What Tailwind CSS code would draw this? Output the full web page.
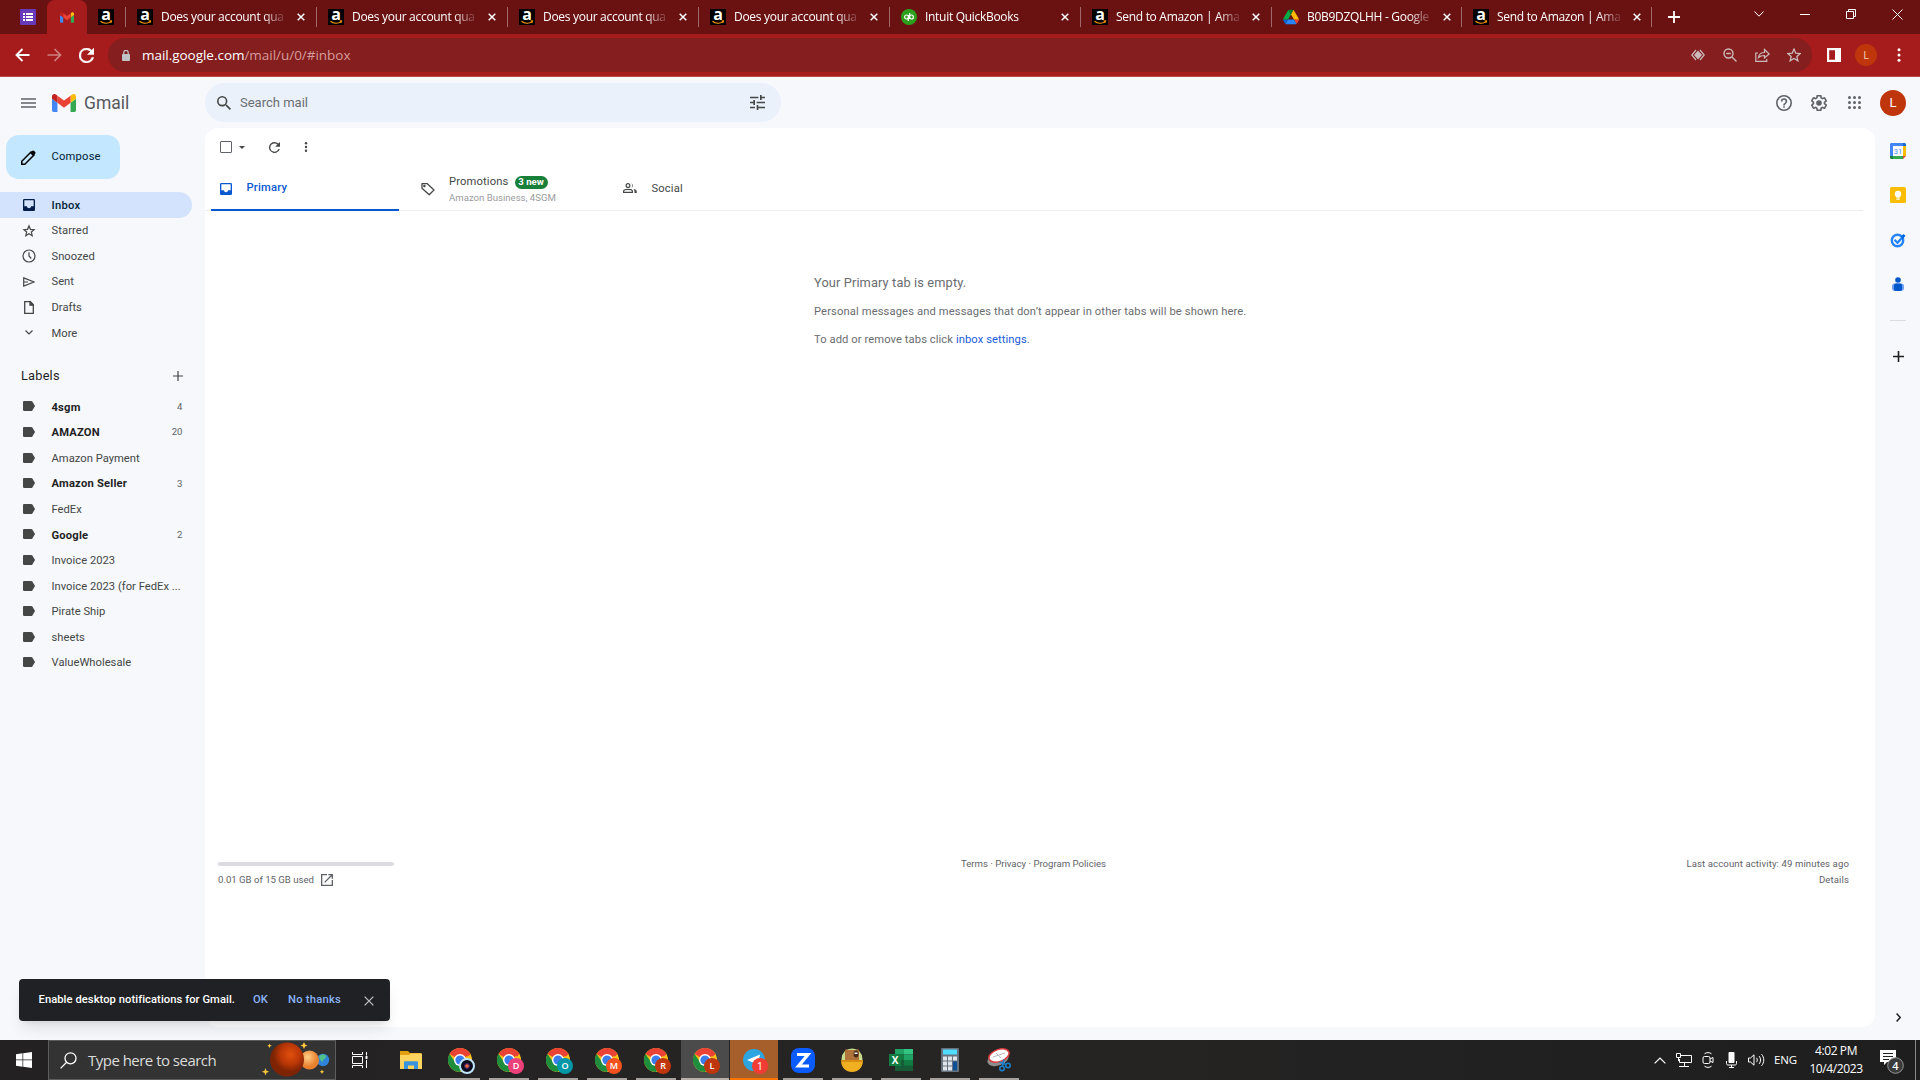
<!DOCTYPE html>
<html lang="en">
<head>
  <meta charset="UTF-8">
  <meta name="viewport" content="width=device-width, initial-scale=1.0">
  <title>Gmail</title>
  <script src="https://cdn.jsdelivr.net/npm/@tailwindcss/browser@4"></script>
  <style>
    body {
      font-family: Roboto, "Liberation Sans", sans-serif;
    }
    .chrome-ui {
      font-family: "Open Sans", "Noto Sans", sans-serif;
    }
  </style>
</head>
<body class="w-[1920px] h-[1080px] overflow-hidden flex flex-col bg-[#f6f8fc] text-[#444746]">

  <!-- shared icons -->
  <svg class="hidden">
    <symbol id="amazon" viewBox="0 0 16 16">
      <rect width="16" height="16" fill="#000"/>
      <text x="8" y="11" font-family="Open Sans" font-weight="700" font-size="16" fill="#fff" text-anchor="middle">a</text>
      <path d="M2.500 12.300c3 2.300 7.500 2.400 10.500.6M11.500 12l2-.2-.6 2" fill="none" stroke="#f90" stroke-width="1.100"/>
    </symbol>
    <symbol id="quickbooks" viewBox="0 0 16 16">
      <circle cx="8" cy="8" r="8" fill="#2ca01c"/>
      <circle cx="5.600" cy="8" r="2" fill="none" stroke="#fff" stroke-width="1.200"/>
      <circle cx="10.400" cy="8" r="2" fill="none" stroke="#fff" stroke-width="1.200"/>
      <path d="M7.300 6v6M8.700 4v6" stroke="#fff" stroke-width="1.200"/>
    </symbol>
    <symbol id="drive" viewBox="0 0 87.3 78">
      <path d="m6.6 66.85 3.85 6.65c.8 1.4 1.95 2.5 3.3 3.3l13.75-23.8h-27.5c0 1.550.4 3.100 1.200 4.500z" fill="#0066da"/>
      <path d="m43.650 25-13.750-23.800c-1.350.8-2.500 1.900-3.300 3.300l-25.400 44a9.060 9.060 0 0 0 -1.200 4.500h27.500z" fill="#00ac47"/>
      <path d="m73.550 76.800c1.350-.8 2.500-1.900 3.300-3.300l1.600-2.750 7.650-13.250c.8-1.400 1.200-2.950 1.200-4.500h-27.502l5.852 11.500z" fill="#ea4335"/>
      <path d="m43.650 25 13.750-23.800c-1.350-.8-2.900-1.200-4.500-1.200h-18.500c-1.600 0-3.150.45-4.500 1.200z" fill="#00832d"/>
      <path d="m59.800 53h-32.300l-13.750 23.800c1.350.8 2.900 1.200 4.500 1.200h50.800c1.600 0 3.150-.45 4.500-1.200z" fill="#2684fc"/>
      <path d="m73.400 26.500-12.700-22c-.8-1.400-1.950-2.500-3.300-3.300l-13.750 23.800 16.150 28h27.450c0-1.550-.4-3.100-1.200-4.500z" fill="#ffba00"/>
    </symbol>
    <symbol id="gmail" viewBox="52 42 88 66">
      <path fill="#4285f4" d="M58 108h14V74L52 59v43c0 3.320 2.690 6 6 6"/>
      <path fill="#34a853" d="M120 108h14c3.320 0 6-2.690 6-6V59l-20 15"/>
      <path fill="#fbbc04" d="M120 48v26l20-15v-8c0-7.420-8.470-11.650-14.400-7.200"/>
      <path fill="#ea4335" d="M72 74V48l24 18 24-18v26L96 92"/>
      <path fill="#c5221f" d="M52 51v8l20 15V48l-5.600-4.200c-5.940-4.450-14.400-.22-14.400 7.200"/>
    </symbol>
    <symbol id="chrome" viewBox="0 0 24 24">
      <circle cx="12" cy="12" r="12" fill="#fbc116"/>
      <path d="M12 12 1.600 6A12 12 0 0 1 22.400 6z" fill="#ea4335"/>
      <path d="M12 12 12 24A12 12 0 0 1 1.600 6L7 14z" fill="#1e8e3e"/>
      <path d="M12 24 17 15 7 14z" fill="#1e8e3e"/>
      <path d="M12 6h10.400L20 8.500z" fill="#ea4335"/>
      <circle cx="12" cy="12" r="6" fill="#fff"/>
      <circle cx="12" cy="12" r="4.600" fill="#3b7ded"/>
    </symbol>
    <symbol id="label" viewBox="0 0 12 10">
      <path d="M1.200 0h7c.5 0 .9.200 1.200.6L12 5 9.400 9.400c-.3.400-.7.600-1.200.6h-7A1.200 1.200 0 0 1 0 8.800V1.200C0 .5.500 0 1.200 0z"/>
    </symbol>
    <symbol id="inbox" viewBox="3 3 18 18">
      <path d="M19 3H5a2 2 0 0 0-2 2v14c0 1.100.9 2 2 2h14a2 2 0 0 0 2-2V5a2 2 0 0 0-2-2zm0 11h-4c0 1.660-1.350 3-3 3s-3-1.340-3-3H5V5h14v9z"/>
    </symbol>
    <symbol id="close" viewBox="0 0 8 8">
      <path d="M.7.7l6.600 6.600M7.300.7.700 7.300" stroke="currentColor" stroke-width="1.500" fill="none"/>
    </symbol>
  </svg>

  <!-- browser tabs -->
  <div class="chrome-ui h-[34px] shrink-0 bg-[#6a1112] flex text-white">
    <div class="w-[47px] flex items-center pl-5">
      <svg class="w-4 h-4" viewBox="0 0 16 16"><rect width="16" height="16" rx="1" fill="#673ab7"/><path d="M3 4h2v2H3zM6 4h7v2H6zM3 7h2v2H3zM6 7h7v2H6zM3 10h2v2H3zM6 10h7v2H6z" fill="#fff"/></svg>
    </div>
    <div class="w-10 bg-[#a61c1d] rounded-t-lg flex items-center justify-center"><svg class="w-[14px] h-[11px]"><use href="#gmail"/></svg></div>
    <div class="w-[38px] flex items-center pl-[11px]"><svg class="w-4 h-4"><use href="#amazon"/></svg></div>
    <div id="tabs" class="flex"></div>
    <div class="border-l border-[#a06a6a] h-5 mt-[7px] pl-4 flex items-center">
      <svg class="w-3 h-3" viewBox="0 0 12 12"><path d="M6 0v12M0 6h12" stroke="#fff" stroke-width="1.800"/></svg>
    </div>
    <div class="ml-auto flex items-center h-[28px] gap-[36px] pr-[17px]">
      <svg class="w-[10px] h-[6px]" viewBox="0 0 10 6"><path d="M.5.5 5 5.200 9.500.5" fill="none" stroke="#fff"/></svg>
      <svg class="w-[10px] h-[10px]" viewBox="0 0 10 10"><path d="M0 5.500h10" stroke="#fff"/></svg>
      <svg class="w-[10px] h-[10px]" viewBox="0 0 10 10"><path d="M.5 2.500h7v7h-7zM2.500 2V.5h7v7H8" fill="none" stroke="#fff"/></svg>
      <svg class="w-[11px] h-[11px]" viewBox="0 0 11 11"><path d="M.5.5l10 10M10.500.5l-10 10" stroke="#fff"/></svg>
    </div>
  </div>

  <!-- address bar -->
  <div class="chrome-ui h-[43px] shrink-0 bg-[#a61c1d] border-b border-[#b94a4b] flex items-center">
    <div class="flex items-center pl-[15px] gap-[17px] w-[108px]">
      <svg class="w-[15px] h-[14px]" viewBox="0 0 15 14"><path d="M14.500 7H1.500M7.500 1 1.500 7l6 6" fill="none" stroke="#fff" stroke-width="1.900"/></svg>
      <svg class="w-[15px] h-[14px]" viewBox="0 0 15 14"><path d="M.5 7h13M7.500 1l6 6-6 6" fill="none" stroke="#cf8080" stroke-width="1.700"/></svg>
      <svg class="w-[15px] h-[15px]" viewBox="4 4 16 16"><path fill="#fff" stroke="#fff" stroke-width=".5" d="M17.650 6.350A7.960 7.960 0 0 0 12 4a8 8 0 1 0 7.730 10h-2.080A6 6 0 1 1 12 6c1.660 0 3.140.69 4.220 1.780L13 11h7V4l-2.350 2.350z"/></svg>
    </div>
    <div class="w-[1704px] h-[34px] rounded-full bg-[#841e1f] flex items-center pl-[14px] pr-[11px]">
      <svg class="w-2 h-[11px]" viewBox="0 0 8 11"><rect y="4" width="8" height="7" rx="1" fill="#c0c4c6"/><path d="M1.800 4V2.500a2.200 2.200 0 0 1 4.400 0V4" fill="none" stroke="#c0c4c6" stroke-width="1.200"/></svg>
      <p class="ml-3 text-[13.5px] text-[#d79c9c] tracking-[-0.03px]"><span class="text-white">mail.google.com</span>/mail/u/0/#inbox</p>
      <div class="ml-auto flex items-center gap-[17px] text-[#cdbcbc]">
        <svg class="-ml-0.5 mr-0.5 w-[14px] h-3" viewBox="0 0 14 12"><path d="M5 1 .8 6 5 11M9 1l4.200 5L9 11" fill="none" stroke="currentColor" stroke-width="1.200"/><path d="M7 1.500 11 6l-4 4.500L3 6z" fill="currentColor"/></svg>
        <svg class="-ml-px mr-px w-[14px] h-[14px]" viewBox="0 0 14 14" fill="none" stroke="currentColor" stroke-width="1.400"><circle cx="5.500" cy="5.500" r="4.500"/><path d="M9 9l4.500 4.500M3.200 5.500h4.600"/></svg>
        <svg class="w-[15px] h-[14px]" viewBox="0 0 15 14" fill="none" stroke="currentColor" stroke-width="1.200"><path d="M3 5H.8v8.300h11V11M3.500 9.500c.5-3.300 2.500-5 6-5V1.500l4.700 4.500-4.700 4V7.500c-2.800 0-4.500.5-6 2z"/></svg>
        <svg class="w-[14px] h-[14px]" viewBox="0 0 24 24" fill="none" stroke="currentColor" stroke-width="2.200"><path d="M12 1.800l3 7 7.600.7-5.700 5 1.700 7.500-6.600-4-6.600 4 1.700-7.500-5.700-5 7.600-.7z"/></svg>
      </div>
    </div>
    <svg class="ml-[15px] w-[14px] h-[14px]" viewBox="0 0 14 14"><path d="M0 0h14v14H0zM2.200 2.200v9.600H8V2.200z" fill="#fff" fill-rule="evenodd"/></svg>
    <div class="ml-[14px] w-[22px] h-[22px] rounded-full bg-[#bf360c] text-[#f5cdbd] text-[11px] flex items-center justify-center">L</div>
    <svg class="ml-[20px] w-[4px] h-[14px]" viewBox="0 0 4 14" fill="#fff"><circle cx="2" cy="1.800" r="1.500"/><circle cx="2" cy="7" r="1.500"/><circle cx="2" cy="12.200" r="1.500"/></svg>
  </div>

  <!-- gmail header -->
  <header class="h-[51px] shrink-0 flex items-center pl-[21px] pr-[14px]">
    <svg class="w-[15px] h-[10px]" viewBox="0 0 15 10"><path d="M0 1h15M0 5h15M0 9h15" stroke="#5f6368" stroke-width="1.500"/></svg>
    <svg class="ml-4 w-6 h-[18px]"><use href="#gmail"/></svg>
    <span class="ml-2 pt-0.5 w-[121px] text-[17.5px] text-[#55585c]">Gmail</span>
    <div class="w-[576px] h-[39px] rounded-full bg-[#eaf1fb] flex items-center pl-3 pr-4">
      <svg class="w-[14px] h-[14px]" viewBox="3 3 17.500 17.500" fill="#444746"><path d="M15.500 14h-.79l-.28-.27A6.470 6.470 0 0 0 16 9.500 6.500 6.500 0 1 0 9.500 16c1.610 0 3.090-.59 4.230-1.570l.27.28v.79l5 4.990L20.490 19l-4.990-5zm-6 0a4.500 4.500 0 1 1 0-9 4.500 4.500 0 0 1 0 9z"/></svg>
      <span class="ml-[9px] text-[13px] text-[#6a6e72]">Search mail</span>
      <svg class="ml-auto w-[15px] h-[15px]" viewBox="3 3 18 18" fill="#444746"><path d="M3 17v2h6v-2H3zM3 5v2h10V5H3zm10 16v-2h8v-2h-8v-2h-2v6h2zM7 9v2H3v2h4v2h2V9H7zm14 4v-2H11v2h10zm-6-4h2V7h4V5h-4V3h-2v6z"/></svg>
    </div>
    <div class="ml-auto flex items-center text-[#5f6368]">
      <svg class="w-4 h-4" viewBox="2 2 20 20" fill="currentColor"><path d="M11 18h2v-2h-2v2zm1-16a10 10 0 1 0 0 20 10 10 0 0 0 0-20zm0 18a8 8 0 1 1 0-16 8 8 0 0 1 0 16zm0-14a4 4 0 0 0-4 4h2a2 2 0 1 1 4 0c0 2-3 1.750-3 5h2c0-2.250 3-2.500 3-5a4 4 0 0 0-4-4z"/></svg>
      <svg class="ml-[19px] w-4 h-4" viewBox="2 2 20 20" fill="currentColor"><path d="M13.850 22.250h-3.700c-.74 0-1.360-.54-1.450-1.270l-.27-1.890c-.27-.14-.53-.29-.79-.46l-1.800.72c-.7.260-1.470-.03-1.810-.65L2.200 15.530c-.35-.66-.2-1.440.36-1.880l1.530-1.190c-.01-.15-.02-.3-.02-.46 0-.15.01-.31.020-.46l-1.520-1.190c-.59-.45-.74-1.260-.37-1.880l1.850-3.190c.34-.62 1.110-.9 1.790-.63l1.810.73c.26-.17.520-.32.780-.46l.27-1.910c.09-.7.710-1.250 1.440-1.250h3.700c.74 0 1.360.54 1.450 1.270l.27 1.890c.27.14.53.29.79.46l1.800-.72c.71-.26 1.480.03 1.820.65l1.840 3.180c.36.66.2 1.440-.36 1.880l-1.520 1.190c.01.150.02.300.02.460s-.01.310-.02.460l1.520 1.190c.56.45.72 1.230.37 1.860l-1.860 3.220c-.34.62-1.110.9-1.800.63l-1.800-.72c-.26.17-.52.32-.78.46l-.27 1.910c-.1.680-.72 1.220-1.460 1.220zm-3.230-2h2.760l.37-2.550.53-.22c.44-.18.880-.44 1.340-.78l.45-.34 2.380.96 1.380-2.400-2.030-1.580.07-.56c.03-.26.060-.51.060-.78s-.03-.53-.06-.78l-.07-.56 2.030-1.580-1.390-2.400-2.390.96-.45-.35c-.42-.32-.87-.58-1.330-.77l-.52-.22-.37-2.550h-2.760l-.37 2.550-.53.21c-.44.19-.88.44-1.340.79l-.45.33-2.380-.95-1.390 2.390 2.030 1.580-.07.56a7 7 0 0 0-.06.79c0 .260.02.530.06.780l.07.56-2.030 1.580 1.380 2.400 2.390-.96.45.35c.43.33.86.58 1.330.77l.53.22.38 2.550z"/><circle cx="12" cy="12" r="3.500"/></svg>
      <svg class="ml-[21px] w-[13px] h-[13px]" viewBox="0 0 13 13" fill="currentColor"><circle cx="1.500" cy="1.500" r="1.500"/><circle cx="6.500" cy="1.500" r="1.500"/><circle cx="11.500" cy="1.500" r="1.500"/><circle cx="1.500" cy="6.500" r="1.500"/><circle cx="6.500" cy="6.500" r="1.500"/><circle cx="11.500" cy="6.500" r="1.500"/><circle cx="1.500" cy="11.500" r="1.500"/><circle cx="6.500" cy="11.500" r="1.500"/><circle cx="11.500" cy="11.500" r="1.500"/></svg>
      <div class="ml-[19px] w-[26px] h-[26px] rounded-full bg-[#bf360c] text-white text-[13px] flex items-center justify-center">L</div>
    </div>
  </header>

  <div class="flex h-[912px] shrink-0">
    <!-- left nav -->
    <nav class="w-[205px] shrink-0 pt-[7px] text-[11.2px]">
      <div class="ml-[6px] w-[114px] h-[44px] rounded-[13px] bg-[#c2e7ff] flex items-center pl-[15px] text-[#001d35]">
        <svg class="w-[15px] h-[15px]" viewBox="0 0 15 15"><path d="M.8 11.200 10 2l3 3-9.200 9.200H.8z" fill="none" stroke="#000" stroke-width="1.500"/><path d="M9 3l2-2c.7-.7 1.500-.7 2.200 0l.8.800c.7.700.7 1.500 0 2.200l-2 2z" fill="#000"/></svg>
        <span class="ml-[15.500px] tracking-[0.2px]">Compose</span>
      </div>
      <div class="mt-[13.2px]">
        <div class="w-48 h-[25.6px] rounded-r-full bg-[#d3e3fd] flex items-center pl-[23px] gap-[16.500px] font-medium text-[#001d35]"><svg class="w-3 h-3" fill="#041e49"><use href="#inbox"/></svg><span class="pt-0.5 tracking-[0.250px]">Inbox</span></div>
        <div class="h-[25.6px] flex items-center pl-[22px] gap-[15.500px]"><svg class="w-[14px] h-[14px]" viewBox="1 1 22 22" fill="none" stroke="#444746" stroke-width="1.900"><path d="M12 4l2.300 5.400 5.700.5-4.300 3.800 1.300 5.700-5-3-5 3 1.300-5.700L4 9.900l5.700-.5z"/></svg><span class="pt-0.5 tracking-[0.1px]">Starred</span></div>
        <div class="h-[25.6px] flex items-center pl-[22px] gap-[15.500px]"><svg class="w-[14px] h-[14px]" viewBox="0 0 14 14" fill="none" stroke="#444746" stroke-width="1.200"><circle cx="7" cy="7" r="6"/><path d="M7 3.300V7l2.300 2.500"/></svg><span class="pt-0.5">Snoozed</span></div>
        <div class="h-[25.6px] flex items-center pl-[23px] gap-[16.500px]"><svg class="w-3 h-[10px]" viewBox="0 0 12 10" fill="none" stroke="#444746" stroke-width="1.200"><path d="M.7.900 11 5 .7 9.100zM.7 5H5"/></svg><span class="pt-0.5">Sent</span></div>
        <div class="h-[25.6px] flex items-center pl-6 gap-[17.500px]"><svg class="w-[10px] h-[13px]" viewBox="0 0 10 13" fill="none" stroke="#444746" stroke-width="1.300"><path d="M.7.700h5.600l3 3v8.600H.7z"/><path d="M6 .5v3.700h3.500z" fill="#444746"/></svg><span class="pt-0.5">Drafts</span></div>
        <div class="h-[25.6px] flex items-center pl-[25px] gap-[18.500px]"><svg class="w-2 h-[5px]" viewBox="0 0 8 5" fill="none" stroke="#444746" stroke-width="1.200"><path d="M.5.500 4 4 7.500.500"/></svg><span class="pt-0.5">More</span></div>
      </div>
      <div class="h-[48.4px] pt-[12px] pl-[21px] pr-[22px] flex items-center justify-between text-[#1f1f1f]">
        <span class="text-[12.8px] tracking-[0.2px]">Labels</span>
        <svg class="w-[10px] h-[10px]" viewBox="0 0 10 10"><path d="M5 0v10M0 5h10" stroke="#444746" stroke-width="1.200"/></svg>
      </div>
      <div id="labels"></div>
    </nav>

    <!-- mail card -->
    <main class="w-[1670px] h-[899px] bg-white rounded-[13px] flex flex-col">
      <div class="h-[38px] flex items-center pl-[15px] text-[#444746]">
        <div class="w-3 h-3 border-[1.500px] border-[#5f6368] rounded-[1px]"></div>
        <svg class="ml-[7px] w-[6px] h-[3px]" viewBox="0 0 6 3"><path d="M0 0h6L3 3z" fill="#444746"/></svg>
        <svg class="ml-[23.500px] w-[11px] h-[11px]" viewBox="4 4 16 16" fill="#444746"><path d="M17.650 6.350A7.960 7.960 0 0 0 12 4a8 8 0 1 0 7.730 10h-2.080A6 6 0 1 1 12 6c1.660 0 3.140.69 4.220 1.780L13 11h7V4l-2.350 2.350z"/></svg>
        <svg class="ml-[24.500px] w-[4px] h-[10px]" viewBox="0 0 4 10" fill="#444746"><circle cx="2" cy="1.200" r="1.200"/><circle cx="2" cy="5" r="1.200"/><circle cx="2" cy="8.800" r="1.200"/></svg>
      </div>
      <div class="w-[1658px] h-[45px] border-b border-[#eceff1] flex pl-[6px] text-[11.2px]">
        <div class="w-[188px] h-[45px] border-b-2 border-[#0b57d0] flex items-center pl-[9px] pt-0.5 text-[#0b57d0] font-medium">
          <svg class="w-3 h-3" fill="#0b57d0"><use href="#inbox"/></svg><span class="ml-[14.500px] tracking-[0.2px]">Primary</span>
        </div>
        <div class="w-[202px] flex items-center pl-[22px] pt-px">
          <svg class="w-[14px] h-[14px]" viewBox="0 0 14 14" fill="none" stroke="#444746" stroke-width="1.300"><path d="M1 1.700h5.300L13 8l-4.800 4.800L1 6.300z" stroke-linejoin="round"/><circle cx="3.400" cy="4" r=".6"/></svg>
          <div class="ml-[14px] pt-[3px]">
            <div class="flex items-center h-[14px] gap-[6px] tracking-[0.150px]">Promotions <span class="bg-[#188038] text-white font-bold text-[9.6px] tracking-normal rounded-full w-[33px] h-[13px] flex items-center justify-center">3 new</span></div>
            <div class="text-[9.6px] leading-[15px] text-[#9a9c9e]">Amazon Business, 4SGM</div>
          </div>
        </div>
        <div class="flex items-center pl-[22px]">
          <svg class="w-[14px] h-[10px]" viewBox="0 0 14 10"><circle cx="5" cy="2.500" r="1.900" fill="none" stroke="#444746" stroke-width="1.200"/><path d="M.6 9.400V8.300C.6 5.800 9.400 5.800 9.400 8.300v1.100z" fill="none" stroke="#444746" stroke-width="1.200"/><path d="M8.300.2a2.500 2.500 0 0 1 0 4.700 3.500 3.500 0 0 0 0-4.700zM10.500 6c2 .4 3.200 1.100 3.200 2.300V10h-2.200V8.300c0-.9-.4-1.700-1-2.300z" fill="#444746"/></svg>
          <span class="ml-[14.500px] pt-0.5 tracking-[0.150px]">Social</span>
        </div>
      </div>
      <div class="pl-[609px] pt-[62px] text-[11.2px] tracking-[0.120px] text-[#6a6d70]">
        <p class="text-[12.8px] leading-[20px]">Your Primary tab is empty.</p>
        <p class="mt-[10px] leading-[18px]">Personal messages and messages that don’t appear in other tabs will be shown here.</p>
        <p class="mt-[10px] leading-[18px] tracking-[0.080px]">To add or remove tabs click <a class="text-[#1a5bd6]" href="#">inbox settings</a>.</p>
      </div>
      <footer class="mt-auto mb-[139px] pl-[13px] pr-[26px] grid grid-cols-3 text-[9.6px] leading-[16px] text-[#5f6368]">
        <div class="pt-[6px]">
          <div class="w-[176px] h-1 rounded-full bg-[#dadce0]"></div>
          <div class="mt-[6px] flex items-center gap-[7px]">0.01 GB of 15 GB used
            <svg class="w-3 h-3" viewBox="3 3 18 18" fill="#5f6368"><path d="M19 19H5V5h7V3H3v18h18v-9h-2v7zM14 3v2h3.590l-9.830 9.830 1.410 1.410L19 6.410V10h2V3h-7z"/></svg>
          </div>
        </div>
        <div class="text-center">Terms · Privacy · Program Policies</div>
        <div class="text-right tracking-[0.1px]">Last account activity: 49 minutes ago<br>Details</div>
      </footer>
    </main>

    <!-- side panel -->
    <aside class="w-[45px] flex flex-col items-center pt-[15px] pl-px">
      <svg class="w-4 h-4" viewBox="0 0 16 16"><path d="M0 1.500C0 .600.600 0 1.500 0H13v3H3v10H0z" fill="#4285f4"/><path d="M13 0h1.500c.9 0 1.500.600 1.500 1.500V3h-3z" fill="#1967d2"/><path d="M13 3h3v10h-3z" fill="#fbbc04"/><path d="M3 13h10v3H3z" fill="#34a853"/><path d="M0 13h3v3H1.500C.6 16 0 15.400 0 14.500z" fill="#188038"/><path d="M13 13h3l-3 3z" fill="#ea4335"/><path d="M3 3h10v10H3z" fill="#fff"/><text x="8" y="10.700" font-size="7.500" text-anchor="middle" fill="#4285f4">31</text></svg>
      <svg class="mt-7 w-4 h-4" viewBox="0 0 16 16"><rect width="16" height="16" rx="1.500" fill="#fbbc04"/><circle cx="8" cy="7" r="3.200" fill="#fff"/><path d="M6.300 9h3.400v1.800H6.300zM6.300 11.600h3.400v1.200H6.300z" fill="#fff"/></svg>
      <svg class="mt-[29px] w-4 h-4" viewBox="0 0 16 16"><circle cx="7.500" cy="8.500" r="5.700" fill="none" stroke="#2684fc" stroke-width="2.400"/><path d="M4.500 7.800l3 3L14 3.500" fill="none" stroke="#2684fc" stroke-width="2.300"/><path d="M11 4.500 13.500 2l2 1.800L12.500 7z" fill="#0066da"/></svg>
      <svg class="mt-[29px] w-3 h-[14px]" viewBox="0 0 12 14"><circle cx="6" cy="3" r="2.800" fill="#0057cc"/><rect y="6.500" width="12" height="7.500" rx="3" fill="#6e9df5"/><rect x="2" y="6.500" width="8" height="7.500" rx="2" fill="#0057cc"/></svg>
      <div class="mt-[29px] w-4 h-px bg-[#dadce0]"></div>
      <svg class="mt-[30px] w-[11px] h-[11px]" viewBox="0 0 11 11"><path d="M5.500 0v11M0 5.500h11" stroke="#1f1f1f" stroke-width="1.600"/></svg>
      <svg class="mt-auto mb-[18px] w-[5px] h-[9px]" viewBox="0 0 5 9"><path d="M.6.600l3.600 3.900L.6 8.400" fill="none" stroke="#1f1f1f" stroke-width="1.500"/></svg>
    </aside>
  </div>

  <!-- notification toast -->
  <div class="absolute left-[19px] top-[979px] w-[371px] h-[42px] rounded bg-[#202124] shadow-lg flex items-center pl-[19.500px] pt-px text-[11.2px] tracking-[0.060px] font-medium text-white">
    <span class="w-[214.500px]">Enable desktop notifications for Gmail.</span>
    <span class="w-[35px] text-[#8ab4f8]">OK</span>
    <span class="w-[76px] tracking-[0.250px] text-[#8ab4f8]">No thanks</span>
    <svg class="w-[10px] h-[10px] text-[#bdc1c6]" viewBox="0 0 8 8"><path d="M.5.500l7 7M7.500.500l-7 7" stroke="currentColor" stroke-width="1"/></svg>
  </div>

  <!-- taskbar -->
  <div class="chrome-ui h-10 shrink-0 bg-[#201f20] bg-linear-to-r from-[#232122] via-[#262524] to-[#1f1e1f] flex text-white">
    <div class="w-12 flex items-center pl-4"><svg class="w-4 h-4" viewBox="0 0 16 16" fill="#fff"><path d="M0 2.200 6.500 1.300v6.300H0zM7.200 1.200 16 0v7.600H7.200zM0 8.300h6.500v6.400L0 13.800zM7.200 8.300H16V16l-8.800-1.200z"/></svg></div>
    <div class="w-[288px] border border-[#5d5d5d] bg-[#333] flex items-center pl-[11px]">
      <svg class="w-[17px] h-[17px]" viewBox="0 0 17 17" fill="none" stroke="#fff" stroke-width="1.300"><circle cx="10.500" cy="6.300" r="5.500"/><path d="M6.600 10.300.6 16.400"/></svg>
      <span class="ml-[11px] w-[130px] whitespace-nowrap text-[15px] tracking-[-0.520px] text-[#dcdcdc]">Type here to search</span>
      <svg class="ml-[42px] w-[72px] h-[38px]" viewBox="260 1041 72 38">
        <defs><radialGradient id="mars" cx=".6" cy=".35"><stop offset="0" stop-color="#e0500e"/><stop offset=".6" stop-color="#b93606"/><stop offset="1" stop-color="#7e2405"/></radialGradient>
        <radialGradient id="venus" cx=".4" cy=".35"><stop offset="0" stop-color="#ffd08a"/><stop offset="1" stop-color="#e8812e"/></radialGradient></defs>
        <circle cx="323" cy="1060" r="6.200" fill="#2f83d8"/><path d="M319 1057c2-4 6-3 7-1s-3 3-3 5-3 0-4-4z" fill="#4fc08b"/>
        <circle cx="309.500" cy="1060" r="9.500" fill="url(#venus)"/>
        <circle cx="287" cy="1059.500" r="17" fill="url(#mars)"/>
        <path d="M265.500 1068l1 2.700 2.700 1-2.700 1-1 2.700-1-2.700-2.700-1 2.700-1zM304 1042l1.100 2.400 2.400 1.100-2.400 1.100-1.100 2.400-1.100-2.400-2.400-1.100 2.400-1.100zM269.500 1043.500l.7 1.500 1.500.7-1.500.7-.7 1.500-.7-1.500-1.500-.7 1.500-.7zM322 1069.500l.7 1.500 1.500.7-1.500.7-.7 1.500-.7-1.500-1.500-.7 1.500-.7z" fill="#ffc83d"/>
      </svg>
    </div>
    <div class="w-[60px] flex items-center pl-4">
      <svg class="w-4 h-4 shrink-0" viewBox="0 0 16 16" fill="none" stroke="#fff"><path d="M.5 0v2.500h10V0M.5 16v-2.500h10V16M.5 4.500h10v7H.5zM14.500 0v3.500M14.500 8v8"/><path d="M13.500 4h2v3h-2z" fill="#fff" stroke="none"/></svg>
    </div>
    <div class="w-10 flex items-center pl-[4px]">
      <svg class="w-[22px] h-[18px]" viewBox="0 0 22 18"><path d="M0 0h8l2 2h11v5H0z" fill="#e2a010"/><path d="M0 4h9l2-1.500h11V18H0z" fill="#ffd45e"/><path d="M4 18v-6.500c0-.8.500-1.300 1.300-1.300h11.400c.8 0 1.300.500 1.300 1.300V18h-4v-3.500H8V18z" fill="#3a93dd"/></svg>
    </div>
    <div id="apps" class="flex"></div>

    <div class="ml-auto flex items-center">
      <svg class="w-3 h-[7px]" viewBox="0 0 12 7"><path d="M.6 6.400 6 1l5.400 5.400" fill="none" stroke="#fff" stroke-width="1.200"/></svg>
      <svg class="ml-[10px] w-4 h-[14px]" viewBox="0 0 16 14" fill="none" stroke="#fff"><path d="M5 2.500h10.500v7H3.500V6M3 13.500h10M8.500 9.500v4M.5.500h4v4h-4zM2.500 4.500V8"/></svg>
      <svg class="ml-[10px] w-[12px] h-[16px]" viewBox="0 0 12 16" fill="none" stroke="#fff"><path d="M2.500 1.800c2-1.600 5-1.600 7 0M2.500 14.200c2 1.600 5 1.600 7 0"/><rect x="1" y="4.500" width="7" height="7" rx="1.500"/><path d="M8 7l3-1.500v5L8 9"/></svg>
      <svg class="ml-[12px] w-[11px] h-[16px]" viewBox="0 0 11 16"><rect x="2.500" width="6" height="11" rx="1" fill="#fff"/><path d="M.5 9v2.500c0 1 .5 1.500 1.500 1.500h7c1 0 1.500-.5 1.500-1.500V9M5.500 13v2.500M3 15.500h5" fill="none" stroke="#fff"/></svg>
      <svg class="ml-[11px] w-[17px] h-[14px]" viewBox="0 0 17 14" fill="none" stroke="#fff"><path d="M.5 5h2L6 1.800v10.400L2.500 9h-2zM8.500 4.800c1 1.200 1 3.200 0 4.400M11 3c2 2.300 2 5.700 0 8M13.500 1.200c3 3.300 3 8.300 0 11.600"/></svg>
      <span class="ml-[9px] w-[24px] text-[11.500px] tracking-[-0.150px]">ENG</span>
      <div class="ml-[10px] w-[56px] text-center text-[12px] leading-[18px] tracking-[-0.400px] whitespace-nowrap">4:02 PM<br>10/4/2023</div>
      <svg class="ml-[15px] w-[26px] h-[26px] mt-1" viewBox="0 0 26 26"><path d="M1 1h16v12H8l-3 3v-3H1z" fill="#fff"/><path d="M4 4.500h10M4 7.500h10M4 10.500h6" stroke="#222"/><circle cx="16.500" cy="16.500" r="7.800" fill="#3a3a3a" stroke="#999"/><text x="16.500" y="20.500" font-size="11" font-weight="600" text-anchor="middle" fill="#fff">4</text></svg>
      <div class="ml-[10px] mr-1 w-px h-10 bg-[#8a8a8a]"></div>
    </div>
  </div>

  <script>
    const tabs = [
      ['amazon', 'Does your account qua'],
      ['amazon', 'Does your account qua'],
      ['amazon', 'Does your account qua'],
      ['amazon', 'Does your account qua'],
      ['quickbooks', 'Intuit QuickBooks'],
      ['amazon', 'Send to Amazon | Ama'],
      ['drive', 'B0B9DZQLHH - Google'],
      ['amazon', 'Send to Amazon | Ama'],
    ];
    document.getElementById('tabs').innerHTML = tabs.map(([icon, title], i) => `
      <div class="${i < 6 ? 'w-[191px]' : 'w-[190px]'} flex items-center">
        <div class="w-px h-5 bg-[#a06a6a]"></div>
        <svg class="ml-[11px] w-4 h-4"><use href="#${icon}"/></svg>
        <div class="ml-2 w-[127px] whitespace-nowrap text-[12px] tracking-[-0.3px] mask-r-from-80%">${title}</div>
        <svg class="ml-[9px] w-2 h-2"><use href="#close"/></svg>
      </div>`).join('');

    const labels = [
      ['4sgm', 4], ['AMAZON', 20], ['Amazon Payment'], ['Amazon Seller', 3], ['FedEx'], ['Google', 2],
      ['Invoice 2023'], ['Invoice 2023 (for FedEx ...'], ['Pirate Ship'], ['sheets'], ['ValueWholesale'],
    ];
    document.getElementById('labels').innerHTML = labels.map(([name, count]) => `
      <div class="h-[25.6px] flex items-center pl-[23px] pr-[22.500px]">
        <svg class="w-3 h-[10px] mb-px" fill="#444746"><use href="#label"/></svg>
        <span class="ml-[16.500px] pt-0.5 whitespace-nowrap ${count ? 'font-bold tracking-[0.2px] text-[#1f1f1f]' : 'tracking-[0.020px]'}">${name}</span>
        <span class="ml-auto text-[9.6px] text-[#5f6368]">${count || ''}</span>
      </div>`).join('');

    const badge = (letter, cls) => `<svg class="w-6 h-6"><use href="#chrome"/></svg>
      <div class="absolute left-[23px] top-[18px] w-4 h-4 rounded-full text-[9px] font-semibold flex items-center justify-center ${cls}">${letter}</div>`;
    const apps = [
      badge('<i class="w-1 h-1 rounded-full bg-[#f0654a] outline outline-[#4b2a6b]"></i>', 'bg-[#0b0b1c] border-2 border-[#bfe3f7]'),
      badge('D', 'bg-[#ec407a]'),
      badge('O', 'bg-[#0097a7]'),
      badge('M', 'bg-[#f4511e]'),
      badge('R', 'bg-[#bf360c]'),
      badge('L', 'bg-[#bf360c]'),
      `<svg class="w-[22px] h-[22px]" viewBox="0 0 22 22"><circle cx="11" cy="11" r="11" fill="#2ca5e0"/><path d="M4 11 17 5.500 14.500 17 10 13.500z" fill="#fff"/></svg>
       <div class="absolute left-[22px] top-[18px] w-4 h-4 rounded-full bg-[#f23c34] text-[11px] flex items-center justify-center">1</div>`,
      `<svg class="w-6 h-[25px]" viewBox="0 0 24 25"><rect width="24" height="25" rx="8" fill="#0b5cff"/><path d="M6 6.500h11L7.500 18H18" fill="none" stroke="#fff" stroke-width="3.200"/></svg>`,
      `<svg class="w-[22px] h-6" viewBox="0 0 22 24"><circle cx="11" cy="11" r="10.500" fill="#c9dc8c"/><path d="M4 13V3c0-2 2-2.500 3-1h8c1-1.500 3-1 3 1v10z" fill="#b0743a"/><ellipse cx="15" cy="6" rx="2.500" ry="3.500" fill="#4a2a1a"/><path d="M13.500 4.500h3v1.500h-3z" fill="#fff"/><path d="M0 12h22c0 8-5 12-11 12S0 20 0 12z" fill="#f1b022"/><path d="M0 12h22v2H0z" fill="#d98d12"/></svg>`,
      `<svg class="w-6 h-[22px]" viewBox="0 0 24 22"><path d="M6 0h9v5.500H6z" fill="#21a366"/><path d="M15 0h9v5.500h-9z" fill="#33c481"/><path d="M6 5.500h9V11H6z" fill="#107c41"/><path d="M15 5.500h9V11h-9z" fill="#21a366"/><path d="M6 11h18v11H6z" fill="#185c37"/><path d="M15 11h9v5.500h-9z" fill="#107c41"/><path d="M0 5h12v12H0z" fill="#107c41"/><text x="6" y="14.500" font-size="10" font-weight="700" text-anchor="middle" fill="#fff">X</text></svg>`,
      `<svg class="w-[18px] h-6" viewBox="0 0 18 24"><rect width="18" height="24" rx="1" fill="#66727e"/><path d="M2 1.500h14v5H2z" fill="#4fdcff"/><path d="M2 8.500h4v4H2zM7 8.500h4v4H7zM12 8.500h4v4h-4zM2 13.500h4v4H2zM7 13.500h4v4H7zM2 18.500h4v4H2zM7 18.500h4v4H7z" fill="#dfe5ea"/><path d="M12 13.500h4v9h-4z" fill="#0f4f96"/></svg>`,
      `<svg class="w-6 h-6" viewBox="0 0 24 24"><ellipse cx="11" cy="11" rx="11" ry="6.500" transform="rotate(-20 11 11)" fill="#8d8d8d"/><ellipse cx="12" cy="7.500" rx="10.500" ry="6" transform="rotate(-20 12 7.500)" fill="#fff" stroke="#d83b3b" stroke-width="1.500"/><path d="M6 9l12-4M9 5l5 5" stroke="#bbb"/><g fill="none" stroke="#1d7fc9" stroke-width="1.600"><circle cx="15" cy="20.500" r="2.200"/><circle cx="21" cy="17.500" r="2.200"/><path d="M15.500 18 17 11.500M19 16.500 12.500 14"/></g></svg>`,
    ];
    document.getElementById('apps').innerHTML = apps.map((icon, i) => {
      const bg = i === 5 ? 'bg-[#4b4b4b]' : i === 6 ? 'bg-[#a65e2a]' : '';
      const line = i === 5 ? 'w-12 bg-[#b5aea9]' : i === 6 ? 'w-12 bg-[#ff7300]' : 'w-10 bg-[#a8a29e]';
      return `<div class="relative w-12 mr-px h-10 flex items-center justify-center ${bg}">${icon}<div class="absolute bottom-0 h-0.5 ${line}"></div></div>`;
    }).join('');
  </script>
</body>
</html>
